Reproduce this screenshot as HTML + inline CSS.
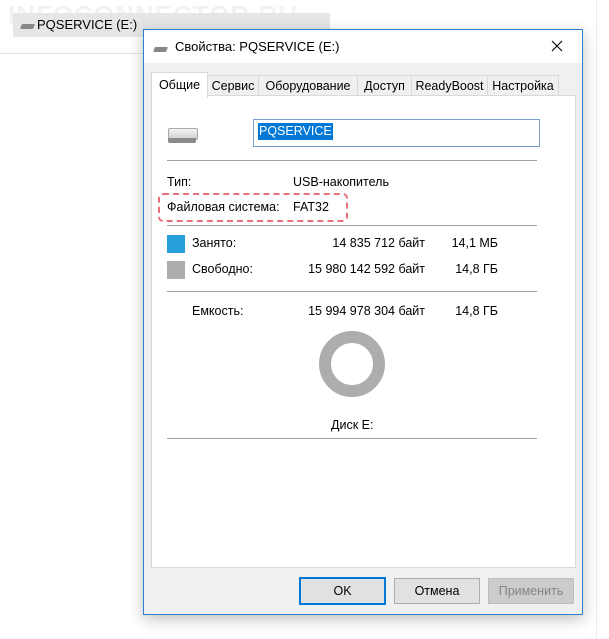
<!DOCTYPE html>
<html><head><meta charset="utf-8"><style>
body{margin:0;width:609px;height:639px;background:#fff;position:relative;overflow:hidden;font-family:"Liberation Sans","Noto Sans CJK SC",sans-serif;font-size:12.5px;color:#000}
.a{position:absolute;white-space:nowrap}
.hr{position:absolute;height:1px;background:#a0a0a0}
.btn{position:absolute;top:578px;height:24px;width:84px;border:1px solid #adadad;background:#e1e1e1;text-align:center;line-height:24px}
</style></head><body>
<div class="a" style="left:8px;top:0;font-size:26px;font-weight:bold;color:#f2f2f2;letter-spacing:1px">INFOCONNECTOR.RU</div>
<div class="a" style="left:13px;top:13px;width:317px;height:24px;background:#e6e6e6"></div>
<div class="a" style="left:21px;top:24px;width:13px;height:5px;background:#888;border-radius:1px;transform:skewX(-20deg)"></div>
<div class="a" style="left:37px;top:17px;font-size:13px">PQSERVICE (E:)</div>
<div class="a" style="left:0;top:53px;width:505px;height:1px;background:#e3e3e3"></div>
<div class="a" style="left:596px;top:0;width:1px;height:639px;background:#ececec"></div>

<div class="a" style="left:143px;top:29px;width:438px;height:584px;border:1px solid #2b7fd0;background:#f0f0f0;box-shadow:0 4px 14px rgba(0,0,0,.25)">
 <div class="a" style="left:0;top:0;width:438px;height:33px;background:#fff"></div>
 <div class="a" style="left:10px;top:17px;width:13px;height:5px;background:#888;border-radius:1px;transform:skewX(-20deg)"></div>
 <div class="a" style="left:31px;top:9px;font-size:13px">Свойства: PQSERVICE (E:)</div>
 <svg class="a" style="left:407px;top:10px" width="12" height="12"><path d="M1 1L11 11M11 1L1 11" stroke="#000" stroke-width="1.1"/></svg>
</div>

<div class="a" style="left:207px;top:75px;width:50px;height:20px;border:1px solid #d9d9d9;border-bottom:0;background:#f0f0f0;line-height:20px;text-align:center">Сервис</div>
<div class="a" style="left:258px;top:75px;width:98px;height:20px;border:1px solid #d9d9d9;border-bottom:0;background:#f0f0f0;line-height:20px;text-align:center">Оборудование</div>
<div class="a" style="left:357px;top:75px;width:53px;height:20px;border:1px solid #d9d9d9;border-bottom:0;background:#f0f0f0;line-height:20px;text-align:center">Доступ</div>
<div class="a" style="left:411px;top:75px;width:75px;height:20px;border:1px solid #d9d9d9;border-bottom:0;background:#f0f0f0;line-height:20px;text-align:center">ReadyBoost</div>
<div class="a" style="left:487px;top:75px;width:70px;height:20px;border:1px solid #d9d9d9;border-bottom:0;background:#f0f0f0;line-height:20px;text-align:center">Настройка</div>
<div class="a" style="left:151px;top:95px;width:423px;height:471px;border:1px solid #d9d9d9;background:#fff"></div>
<div class="a" style="left:151px;top:72px;width:55px;height:25px;border:1px solid #d9d9d9;border-bottom:0;background:#fff;line-height:24px;text-align:center">Общие</div>

<div class="a" style="left:168px;top:128px;width:28px;height:10px;background:linear-gradient(#f4f4f4,#cfcfcf);border:1px solid #aaa;border-radius:2px"></div>
<div class="a" style="left:168px;top:138px;width:28px;height:5px;background:#8a8a8a;border-radius:0 0 2px 2px"></div>
<div class="a" style="left:253px;top:119px;width:285px;height:26px;border:1px solid #7a9ec9;background:#fff"></div>
<div class="a" style="left:258px;top:123px;height:17px;padding:0 1px;background:#0078d7;color:#fff;line-height:17px">PQSERVICE</div>

<div class="hr" style="left:167px;top:160px;width:370px"></div>
<div class="a" style="left:167px;top:175px">Тип:</div>
<div class="a" style="left:293px;top:175px">USB-накопитель</div>
<div class="a" style="left:158px;top:193px;width:186px;height:25px;border:2px dashed #e8707a;border-radius:5px"></div>
<div class="a" style="left:167px;top:200px">Файловая система:</div>
<div class="a" style="left:293px;top:200px">FAT32</div>
<div class="hr" style="left:167px;top:225px;width:370px"></div>
<div class="a" style="left:167px;top:235px;width:18px;height:18px;background:#26a0da"></div>
<div class="a" style="left:192px;top:236px">Занято:</div>
<div class="a" style="left:285px;top:236px;width:140px;text-align:right">14 835 712 байт</div>
<div class="a" style="left:440px;top:236px;width:58px;text-align:right">14,1 МБ</div>
<div class="a" style="left:167px;top:261px;width:18px;height:18px;background:#adadad"></div>
<div class="a" style="left:192px;top:262px">Свободно:</div>
<div class="a" style="left:285px;top:262px;width:140px;text-align:right">15 980 142 592 байт</div>
<div class="a" style="left:440px;top:262px;width:58px;text-align:right">14,8 ГБ</div>
<div class="hr" style="left:167px;top:291px;width:370px"></div>
<div class="a" style="left:192px;top:304px">Емкость:</div>
<div class="a" style="left:285px;top:304px;width:140px;text-align:right">15 994 978 304 байт</div>
<div class="a" style="left:440px;top:304px;width:58px;text-align:right">14,8 ГБ</div>
<div class="a" style="left:319px;top:331px;width:42px;height:42px;border:12px solid #adadad;border-radius:50%"></div>
<div class="a" style="left:331px;top:418px">Диск E:</div>
<div class="hr" style="left:167px;top:438px;width:370px"></div>

<div class="btn" style="left:299px;border:2px solid #0078d7;top:577px;width:83px">OK</div>
<div class="btn" style="left:394px">Отмена</div>
<div class="btn" style="left:488px;background:#cccccc;border-color:#bfbfbf;color:#838383">Применить</div>
</body></html>
